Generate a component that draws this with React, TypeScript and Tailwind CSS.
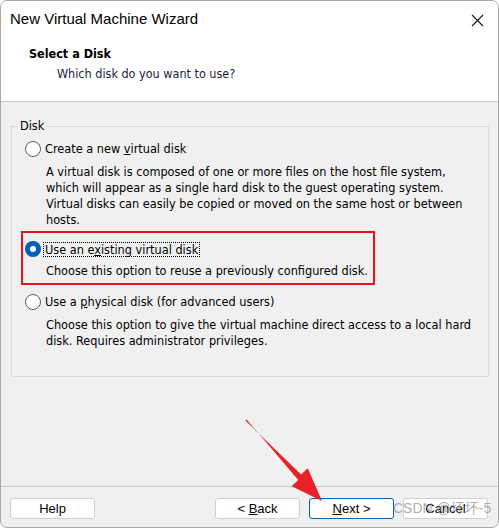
import React from "react";

const tahoma = { fontFamily: "'DejaVu Sans Condensed', 'DejaVu Sans', sans-serif" };
const segoe = { fontFamily: "'Liberation Sans', Arial, sans-serif" };

const Radio = ({ checked }: { checked?: boolean }) =>
  checked ? (
    <span className="flex h-[16px] w-[16px] shrink-0 items-center justify-center rounded-full bg-[#005fb8]">
      <span className="h-[6px] w-[6px] rounded-full bg-white" />
    </span>
  ) : (
    <span className="h-[16px] w-[16px] shrink-0 rounded-full border border-[#5a5a5a] bg-white" />
  );

const Btn = ({ children, primary }: { children: React.ReactNode; primary?: boolean }) => (
  <button
    className={
      primary
        ? "h-[21px] w-[85px] rounded-[3px] border border-[#005fb8] bg-white text-[13px] leading-none text-black"
        : "h-[21px] w-[85px] rounded-[3px] border border-[#d0d0d0] bg-white text-[13px] leading-none text-black"
    }
    style={segoe}
  >
    {children}
  </button>
);

const App = () => {
  return (
    <div className="relative h-[528px] w-[499px] overflow-hidden bg-white">
      <div className="flex h-full flex-col overflow-hidden rounded-[7px] border border-[#a8a8a8] bg-[#f0f0f0]">
        {/* header */}
        <div className="h-[101px] shrink-0 border-b border-[#c8c8c8] bg-white">
          <div className="flex items-center justify-between pt-[8px] pl-[9px] pr-[14px]">
            <span className="text-[15px] leading-[20px] text-black" style={segoe}>
              New Virtual Machine Wizard
            </span>
            <svg width="13" height="13" viewBox="0 0 13 13" className="mt-[2px]">
              <path d="M1 1 L12 12 M12 1 L1 12" stroke="#1a1a1a" strokeWidth="1.1" />
            </svg>
          </div>
          <div className="mt-[17px] pl-[28px] text-[12.5px] leading-[16px] font-bold text-black" style={tahoma}>
            Select a Disk
          </div>
          <div className="mt-[4px] pl-[56px] text-[12.5px] leading-[16px] text-[#1c1c3c]" style={tahoma}>
            Which disk do you want to use?
          </div>
        </div>

        {/* body */}
        <div className="flex-1">
          <fieldset
            className="mt-[16px] ml-[10px] h-[259px] w-[478px] border border-[#dcdcdc] text-[12.6px] leading-[16px] text-black"
            style={tahoma}
          >
            <legend className="ml-[6px] px-[2px]">Disk</legend>

            <div className="mt-[7px] flex items-center gap-[4px] pl-[13px]">
              <Radio />
              <span>
                Create a new <u>v</u>irtual disk
              </span>
            </div>
            <div className="mt-[7px] pl-[34px]">
              A virtual disk is composed of one or more files on the host file system,
              <br />
              which will appear as a single hard disk to the guest operating system.
              <br />
              Virtual disks can easily be copied or moved on the same host or between
              <br />
              hosts.
            </div>

            <div className="mt-[3px] ml-[9px] h-[54px] w-[354px] border-2 border-[#e81123] pt-[8px]">
              <div className="flex items-center gap-[2px] pl-[2px]">
                <Radio checked />
                <span className="border border-dotted border-black px-[1px] leading-[13px]">
                  Use an e<u>x</u>isting virtual disk
                </span>
              </div>
              <div className="mt-[6px] pl-[23px]">
                Choose this option to reuse a previously configured disk.
              </div>
            </div>

            <div className="mt-[9px] flex items-center gap-[4px] pl-[13px]">
              <Radio />
              <span>
                Use a <u>p</u>hysical disk (for advanced users)
              </span>
            </div>
            <div className="mt-[7px] pl-[34px]">
              Choose this option to give the virtual machine direct access to a local hard
              <br />
              disk. Requires administrator privileges.
            </div>
          </fieldset>
        </div>

        {/* footer */}
        <div className="flex h-[41px] shrink-0 items-start justify-between border-t border-[#c8c8c8] pt-[11px] pr-[10px] pl-[9px]">
          <Btn>Help</Btn>
          <div className="flex gap-[9px]">
            <Btn>
              &lt; <u>B</u>ack
            </Btn>
            <Btn primary>
              <u>N</u>ext &gt;
            </Btn>
            <Btn>Cancel</Btn>
          </div>
        </div>
      </div>

      {/* annotation arrow */}
      <svg className="pointer-events-none absolute top-0 left-0" width="499" height="528">
        <polygon
          points="245.4,420.6 301.2,474.5 307.8,468.3 322,501 291.6,486.2 298.2,480.0 246.6,419.4"
          fill="#e8202a"
        />
      </svg>

      {/* watermark */}
      <span
        className="pointer-events-none absolute top-[499px] left-[393px] whitespace-nowrap text-[14px] leading-[18px] text-[#9a9a9a]/80"
        style={{ fontFamily: "'Liberation Sans', 'Noto Sans CJK SC', sans-serif" }}
      >
        CSDN @坏坏-5
      </span>
    </div>
  );
};

export default App;
